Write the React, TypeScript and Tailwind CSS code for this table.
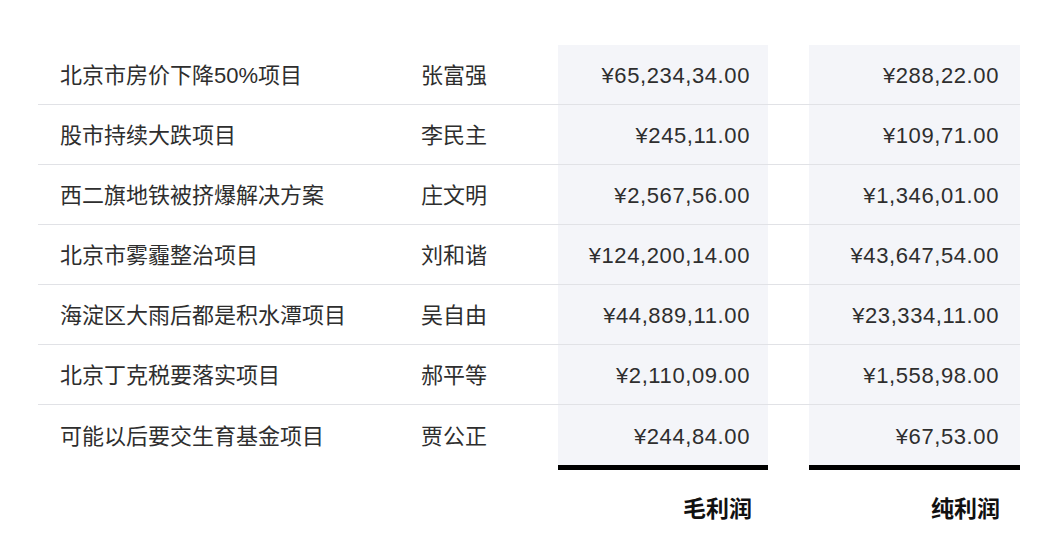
const rows = [
  { name: "北京市房价下降50%项目", owner: "张富强", gross: "¥65,234,34.00", net: "¥288,22.00" },
  { name: "股市持续大跌项目", owner: "李民主", gross: "¥245,11.00", net: "¥109,71.00" },
  { name: "西二旗地铁被挤爆解决方案", owner: "庄文明", gross: "¥2,567,56.00", net: "¥1,346,01.00" },
  { name: "北京市雾霾整治项目", owner: "刘和谐", gross: "¥124,200,14.00", net: "¥43,647,54.00" },
  { name: "海淀区大雨后都是积水潭项目", owner: "吴自由", gross: "¥44,889,11.00", net: "¥23,334,11.00" },
  { name: "北京丁克税要落实项目", owner: "郝平等", gross: "¥2,110,09.00", net: "¥1,558,98.00" },
  { name: "可能以后要交生育基金项目", owner: "贾公正", gross: "¥244,84.00", net: "¥67,53.00" },
];

export default function App() {
  return (
    <div
      className="w-[1060px] h-[550px] bg-white pl-[38px] pt-[45px] text-[#2e2e2e]"
      style={{ fontFamily: '"Liberation Sans", "Noto Sans CJK SC", sans-serif' }}
    >
      <div className="w-[982px] flex flex-col">
        {rows.map((r, i) => (
          <div
            key={r.name}
            className={
              i < rows.length - 1
                ? "flex h-[60px] border-b border-[#e1e2e6]"
                : "flex h-[60px]"
            }
          >
            <div className="w-[361px] pl-[22px] pt-[2px] flex items-center text-[22px]">{r.name}</div>
            <div className="w-[159px] pl-[22px] pt-[2px] flex items-center text-[22px]">{r.owner}</div>
            <div className="w-[210px] pr-[18px] pt-[2px] flex items-center justify-end bg-[#f4f5f9] text-[22px] tracking-[0.6px]">
              {r.gross}
            </div>
            <div className="w-[41px]" />
            <div className="w-[211px] pr-[21px] pt-[2px] flex items-center justify-end bg-[#f4f5f9] text-[22px] tracking-[0.6px]">
              {r.net}
            </div>
          </div>
        ))}
        <div className="flex h-[5px]">
          <div className="w-[520px]" />
          <div className="w-[210px] bg-black" />
          <div className="w-[41px]" />
          <div className="w-[211px] bg-black" />
        </div>
        <div className="flex h-[76px] font-bold text-[23px] text-[#111111]">
          <div className="w-[520px]" />
          <div className="w-[210px] pr-[16px] pt-[2px] flex items-center justify-end">毛利润</div>
          <div className="w-[41px]" />
          <div className="w-[211px] pr-[20px] pt-[2px] flex items-center justify-end">纯利润</div>
        </div>
      </div>
    </div>
  );
}
